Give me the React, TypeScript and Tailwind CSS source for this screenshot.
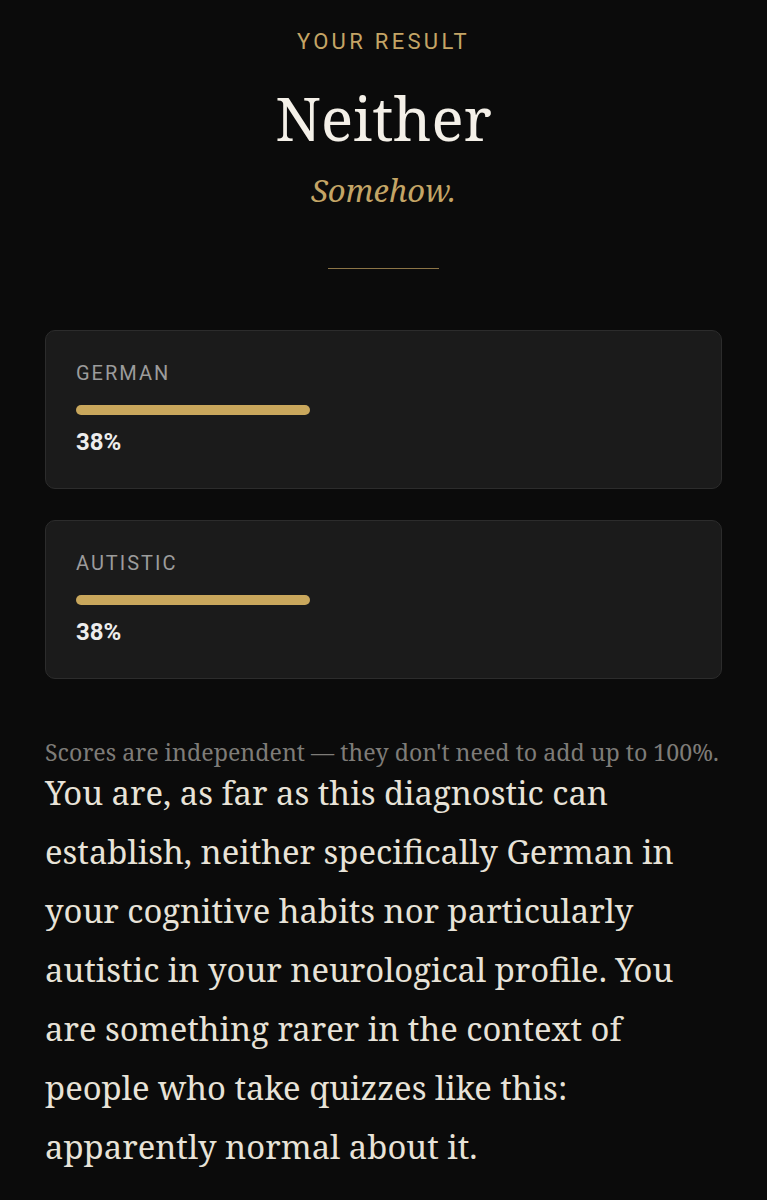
import React from "react";

const serif = { fontFamily: '"Noto Serif", "DejaVu Serif", serif' };

function ScoreCard({ label, value }: { label: string; value: number }) {
  return (
    <div className="rounded-[10px] border border-[#2c2c2c] bg-[#1b1b1b] px-[30px] pt-[30px] pb-[31px]">
      <div className="font-['Roboto',sans-serif] text-[20px] leading-[24px] tracking-[0.1em] text-[#9c9c9c]">{label}</div>
      <div className="mt-[20px] h-[10px] w-full">
        <div className="h-[10px] rounded-full bg-[#c9a75c]" style={{ width: `${value}%` }} />
      </div>
      <div className="mt-[12px] font-['Roboto',sans-serif] text-[24px] font-bold leading-[30px] text-[#ededed]">{value}%</div>
    </div>
  );
}

export default function App() {
  return (
    <div className="min-h-[1200px] w-full bg-[#0b0b0b] px-[45px] pt-[28px]">
      <div className="text-center font-['Roboto',sans-serif] text-[22px] leading-[28px] tracking-[0.15em] text-[#c4a566]">YOUR RESULT</div>
      <h1 style={serif} className="mt-[26px] text-center text-[60px] leading-[72px] text-[#f4f0e8]">Neither</h1>
      <div style={serif} className="mt-[16px] text-center text-[31px] italic leading-[40px] text-[#c4a566]">Somehow.</div>
      <div className="mx-auto mt-[58px] h-px w-[111px] bg-[#8c7547]" />
      <div className="mt-[61px] flex flex-col gap-[31px]">
        <ScoreCard label="GERMAN" value={38} />
        <ScoreCard label="AUTISTIC" value={38} />
      </div>
      <p style={serif} className="mt-[60px] text-[23.2px] leading-[26px] text-[#7e7c78]">
        Scores are independent — they don't need to add up to 100%.
      </p>
      <p style={serif} className="mt-[-2px] text-[32.8px] leading-[59px] text-[#e8e3d8]">
        You are, as far as this diagnostic can establish, neither specifically German in your cognitive habits nor particularly autistic in your neurological profile. You are something rarer in the context of people who take quizzes like this: apparently normal about it.
      </p>
    </div>
  );
}
